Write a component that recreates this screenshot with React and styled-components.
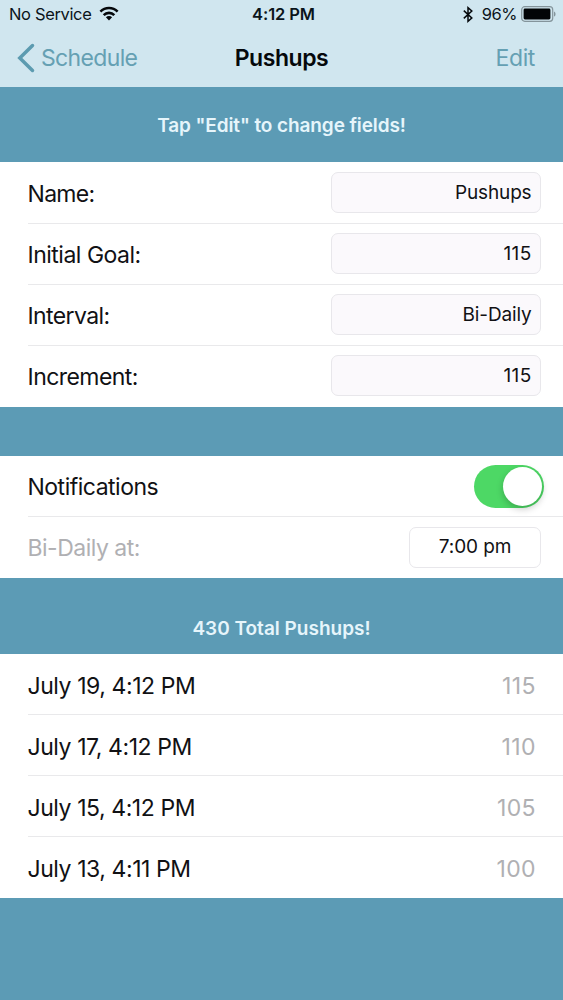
import { useState } from 'react'
import styled, { createGlobalStyle } from 'styled-components'

const GlobalStyle = createGlobalStyle`
  * {
    box-sizing: border-box;
  }

  body {
    margin: 0;
    background-color: #5C9BB5;
    font-family: Inter, 'Liberation Sans', sans-serif;
    color: #111114;
  }
`

const Screen = styled.div`
  width: 563px;
  height: 1000px;
  overflow: hidden;
  background-color: #5C9BB5;
`

const Header = styled.header`
  height: 87px;
  background-color: #D0E6EF;
`

const StatusBar = styled.div`
  display: grid;
  grid-template-columns: 1fr auto 1fr;
  align-items: center;
  height: 29px;
  padding: 0 7px 0 9px;
  font-size: 16.5px;
  line-height: 29px;
  color: #0B141A;
`

const Carrier = styled.div`
  display: flex;
  align-items: center;
  gap: 8px;
  letter-spacing: -0.35px;

  svg {
    margin-bottom: 2px;
  }
`

const Clock = styled.div`
  padding-left: 2px;
  font-weight: 600;
  letter-spacing: -0.1px;
`

const Battery = styled.div`
  display: flex;
  align-items: center;
  justify-content: flex-end;
  letter-spacing: -0.5px;

  svg:first-child {
    margin-right: 9px;
  }

  svg:last-child {
    margin-left: 4px;
    margin-bottom: 2px;
  }
`

const NavBar = styled.nav`
  display: grid;
  grid-template-columns: 1fr auto 1fr;
  align-items: center;
  height: 58px;
  padding: 0 17px;
  line-height: 58px;
`

const NavButton = styled.button`
  display: flex;
  align-items: center;
  justify-self: ${(props) => props.$side};
  gap: 6px;
  padding: 0;
  margin-right: ${(props) => (props.$side === 'end' ? 11 : 0)}px;
  border: 0;
  background: none;
  font-family: inherit;
  font-size: 23px;
  letter-spacing: ${(props) => (props.$side === 'end' ? -0.4 : -0.65)}px;
  color: #65A0B3;
`

const Title = styled.h1`
  margin: 0;
  font-size: 23px;
  font-weight: 600;
  letter-spacing: -0.45px;
  color: #05080B;
`

const Banner = styled.div`
  height: ${(props) => props.$height}px;
  padding-top: ${(props) => props.$top}px;
  font-size: 19px;
  font-weight: 600;
  line-height: 24px;
  letter-spacing: ${(props) => props.$spacing}px;
  text-align: center;
  color: #E6F5FB;
`

const Group = styled.section`
  background-color: #FFFFFF;
`

const Row = styled.div`
  display: flex;
  align-items: center;
  justify-content: space-between;
  height: 61px;
  margin-left: 28px;
  padding-right: ${(props) => props.$right || 22}px;
  border-bottom: 1px solid #E9E9EB;

  &:first-child {
    height: ${(props) => props.$first || 61}px;
  }

  &:last-child {
    border-bottom-color: transparent;
  }
`

const Label = styled.span`
  padding-top: ${(props) => props.$drop || 2}px;
  font-size: 23px;
  line-height: 30px;
  text-indent: -0.5px;
  letter-spacing: ${(props) => props.$spacing || -0.5}px;
  color: ${(props) => (props.$muted ? '#B0B0B3' : '#111114')};
`

const Count = styled(Label)`
  letter-spacing: 0.4px;
`

const Field = styled.div`
  width: ${(props) => (props.$time ? 132 : 210)}px;
  height: 41px;
  padding: 0 ${(props) => (props.$time ? 9 : 8.5)}px;
  border: 1px solid #E8E7EB;
  border-radius: 7px;
  background-color: ${(props) => (props.$time ? '#FFFFFF' : '#FBF9FC')};
  font-size: 19px;
  line-height: ${(props) => (props.$time ? 38 : 40)}px;
  letter-spacing: ${(props) => props.$spacing ?? -0.1}px;
  text-align: ${(props) => (props.$time ? 'center' : 'right')};
`

const Toggle = styled.button`
  display: flex;
  justify-content: ${(props) => (props.$on ? 'flex-end' : 'flex-start')};
  width: 70px;
  height: 43px;
  padding: 2px;
  border: 0;
  border-radius: 22px;
  background-color: ${(props) => (props.$on ? '#4DD865' : '#E5E5E5')};
`

const Knob = styled.span`
  width: 39px;
  height: 39px;
  border-radius: 50%;
  background-color: #FFFFFF;
  box-shadow: 0 3px 7px rgba(0, 0, 0, 0.22);
`

const fields = [
  { label: 'Name:', value: 'Pushups', spacing: -0.7, drop: 3, valueSpacing: -0.15 },
  { label: 'Initial Goal:', value: '115', spacing: -0.5, drop: 2, valueSpacing: 0.3 },
  { label: 'Interval:', value: 'Bi-Daily', spacing: -0.6, drop: 2, valueSpacing: -0.15 },
  { label: 'Increment:', value: '115', spacing: -0.55, drop: 2, valueSpacing: 0.3 },
]

const entries = [
  { date: 'July 19, 4:12 PM', count: 115 },
  { date: 'July 17, 4:12 PM', count: 110 },
  { date: 'July 15, 4:12 PM', count: 105 },
  { date: 'July 13, 4:11 PM', count: 100 },
]

const WifiIcon = () => (
  <svg width="20" height="15" viewBox="0 0 20 15" fill="none" stroke="#05080B" strokeWidth="2.6">
    <path d="M1.4 5.6a12.2 12.2 0 0 1 17.2 0" />
    <path d="M4.7 9.1a7.5 7.5 0 0 1 10.6 0" />
    <path d="M10 14.4 6.9 11.3a4.4 4.4 0 0 1 6.2 0z" fill="#05080B" stroke="none" />
  </svg>
)

const BluetoothIcon = () => (
  <svg width="10" height="17" viewBox="0 0 10 17" fill="none" stroke="#05080B" strokeWidth="1.5">
    <path d="M.8 4.6 8.8 12 5 15.3V1.7L8.8 5 .8 12.4" />
  </svg>
)

const BatteryIcon = () => (
  <svg width="35" height="16" viewBox="0 0 35 16">
    <rect x=".7" y=".7" width="31" height="14.6" rx="3" fill="none" stroke="#84949B" strokeWidth="1.2" />
    <rect x="2.6" y="2.6" width="26.8" height="10.8" rx="1.4" fill="#020507" />
    <path d="M33 5.4c2 .8 2 4.4 0 5.2z" fill="#84949B" />
  </svg>
)

const BackIcon = () => (
  <svg width="18" height="30" viewBox="0 0 18 30" fill="none" stroke="#5C9BB0" strokeWidth="3.5" strokeLinecap="round">
    <path d="M15.5 2.5 2.8 15l12.7 12.5" />
  </svg>
)

const App = () => {
  const [notify, setNotify] = useState(true)

  return (
    <Screen>
      <GlobalStyle />
      <Header>
        <StatusBar>
          <Carrier>No Service <WifiIcon /></Carrier>
          <Clock>4:12 PM</Clock>
          <Battery><BluetoothIcon />96%<BatteryIcon /></Battery>
        </StatusBar>
        <NavBar>
          <NavButton $side="start"><BackIcon />Schedule</NavButton>
          <Title>Pushups</Title>
          <NavButton $side="end">Edit</NavButton>
        </NavBar>
      </Header>
      <Banner $height={75} $top={27} $spacing={-0.1}>Tap "Edit" to change fields!</Banner>
      <Group>
        {fields.map((field) => (
          <Row key={field.label} $first={61.5}>
            <Label $spacing={field.spacing} $drop={field.drop}>{field.label}</Label>
            <Field $spacing={field.valueSpacing}>{field.value}</Field>
          </Row>
        ))}
      </Group>
      <Banner $height={49.5} $top={0} />
      <Group>
        <Row $right={19}>
          <Label>Notifications</Label>
          <Toggle $on={notify} onClick={() => setNotify(!notify)}>
            <Knob />
          </Toggle>
        </Row>
        <Row>
          <Label $muted>Bi-Daily at:</Label>
          <Field $time>7:00 pm</Field>
        </Row>
      </Group>
      <Banner $height={76} $top={39} $spacing={0}>430 Total Pushups!</Banner>
      <Group>
        {entries.map((entry) => (
          <Row key={entry.date} $right={27}>
            <Label $drop={4} $spacing={-0.43}>{entry.date}</Label>
            <Count $muted $drop={4}>{entry.count}</Count>
          </Row>
        ))}
      </Group>
    </Screen>
  )
}

export default App
